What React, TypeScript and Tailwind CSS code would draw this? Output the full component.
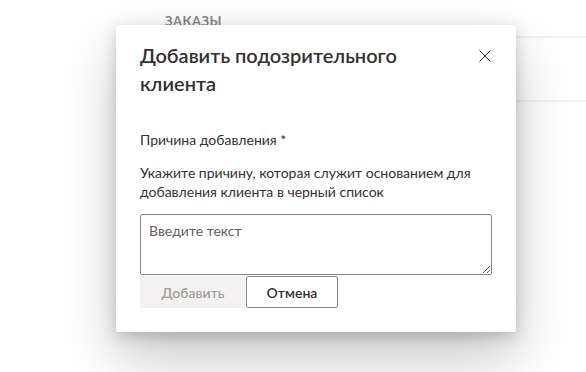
const font = { fontFamily: 'Lato, "Open Sans", sans-serif' }

function CloseIcon() {
  return (
    <svg width="12" height="12" viewBox="0 0 12 12" fill="none">
      <path d="M0.5 0.5L11.5 11.5M11.5 0.5L0.5 11.5" stroke="#323130" strokeWidth="1" />
    </svg>
  )
}

export default function App() {
  return (
    <div className="relative w-[586px] h-[372px] overflow-hidden bg-white text-[#323130]" style={font}>
      {/* Page behind the dialog */}
      <div className="pl-[148px] pt-[13px]">
        <div className="pl-[17px] text-[13px] leading-[17px] font-bold tracking-[0.5px] text-[#8a8886] uppercase">
          Заказы
        </div>
        <div className="mt-[6px] h-[66px] border-t-2 border-b-2 border-[#f3f2f1]" />
      </div>

      {/* Dialog */}
      <div
        className="absolute left-[116px] top-[25px] w-[400px] rounded-[2px] bg-white"
        style={{ boxShadow: '0 25.6px 57.6px 0 rgba(0,0,0,0.22), 0 4.8px 14.4px 0 rgba(0,0,0,0.18)' }}
      >
        <div className="relative pt-4 pl-6 pr-[46px]">
          <h2 className="w-[300px] text-[20px] leading-[28px] font-semibold text-[#323130]">
            Добавить подозрительного клиента
          </h2>
          <button className="absolute right-[15px] top-[15px] flex h-8 w-8 items-center justify-center">
            <CloseIcon />
          </button>
        </div>

        <div className="px-6 pb-6 pt-[33px]">
          <label className="block text-[14px] leading-[20px] text-[#323130]">Причина добавления *</label>
          <p className="mt-[13px] text-[14px] leading-[19px] text-[#323130]">
            Укажите причину, которая служит основанием для добавления клиента в черный список
          </p>
          <textarea
            className="mt-[13px] block h-[61px] w-full rounded-[2px] border border-[#8a8886] px-2 py-[6px] text-[14px] leading-[20px] text-[#323130] outline-none placeholder:text-[#605e5c]"
            placeholder="Введите текст"
            style={font}
          />
          <div className="mt-px flex">
            <button
              disabled
              className="h-8 w-[106px] rounded-[2px] bg-[#f3f2f1] text-[14px] font-semibold text-[#a19f9d]"
              style={font}
            >
              Добавить
            </button>
            <button
              className="h-8 w-[92px] rounded-[2px] border border-[#8a8886] bg-white text-[14px] font-semibold text-[#323130]"
              style={font}
            >
              Отмена
            </button>
          </div>
        </div>
      </div>
    </div>
  )
}
